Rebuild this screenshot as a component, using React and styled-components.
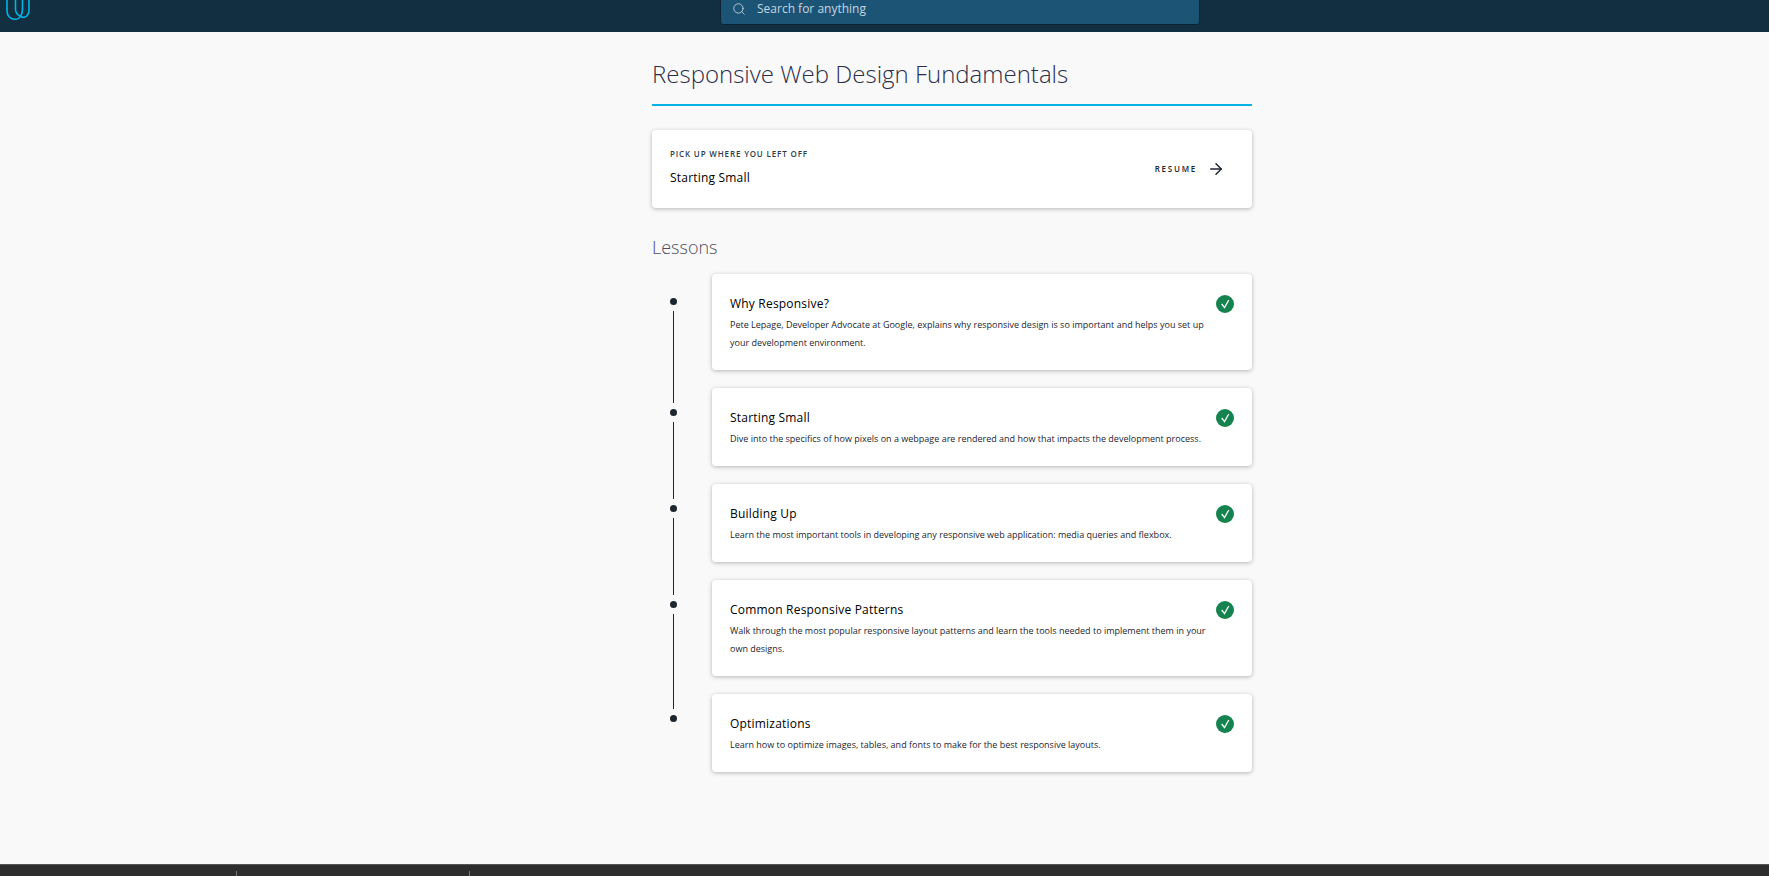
import React from "react";
import styled, { createGlobalStyle } from "styled-components";
import { Search, ArrowRight } from "lucide-react";

const Global = createGlobalStyle`
  html, body { margin: 0; padding: 0; height: 100%; background: #f9f9f9; }
  body { font-family: "Open Sans", "Liberation Sans", sans-serif; overflow: hidden; }
  #root { height: 876px; }
`;

const Page = styled.div`
  height: 876px;
  display: flex;
  flex-direction: column;
  background: #f9f9f9;
`;

const Header = styled.header`
  height: 32px;
  flex: none;
  background: #112f40;
  display: flex;
  align-items: flex-start;
  overflow: hidden;
`;

const LogoSlot = styled.div`
  width: 720px;
  height: 32px;
  flex: none;
`;

const SearchBox = styled.div`
  width: 480px;
  height: 40px;
  margin-top: -15px;
  box-sizing: border-box;
  background: #1c5475;
  border: 1px solid #0c2331;
  border-radius: 3px;
  display: flex;
  align-items: center;
  padding: 7px 0 0 11px;
  gap: 11px;
  color: #c4d6e0;
  font-size: 12px;
`;

const Main = styled.main`
  flex: 1;
  padding: 0 0 0 652px;
`;

const Column = styled.div`
  width: 600px;
`;

const Title = styled.h1`
  margin: 0;
  height: 74px;
  box-sizing: border-box;
  padding-top: 24px;
  border-bottom: 2px solid #02b3e4;
  font-size: 24px;
  line-height: 36px;
  font-weight: 300;
  color: #2c2f4a;
`;

const Card = styled.div`
  background: #fff;
  border-radius: 4px;
  box-shadow: 0 1px 4px rgba(0, 0, 0, 0.28);
`;

const ResumeCard = styled(Card)`
  margin-top: 24px;
  height: 78px;
  box-sizing: border-box;
  padding: 18px 27px 0 18px;
  display: flex;
  justify-content: space-between;
`;

const Eyebrow = styled.div`
  font-size: 8px;
  line-height: 12px;
  font-weight: 600;
  letter-spacing: 0.85px;
  color: #2e3d49;
`;

const ResumeTitle = styled.div`
  margin-top: 9px;
  font-size: 12px;
  line-height: 18px;
  font-weight: 500;
  letter-spacing: 0.2px;
  color: #000;
`;

const ResumeAction = styled.div`
  display: flex;
  align-items: center;
  gap: 10px;
  height: 41px;
  font-size: 8px;
  font-weight: 600;
  letter-spacing: 1.75px;
  color: #1c262f;
`;

const SectionTitle = styled.h2`
  margin: 27px 0 0;
  font-size: 18px;
  line-height: 24px;
  font-weight: 300;
  color: #4f4f5f;
`;

const LessonList = styled.div`
  margin-top: 15px;
  display: flex;
  flex-direction: column;
`;

const LessonRow = styled.div`
  display: grid;
  grid-template-columns: 60px 540px;
  padding-bottom: 18px;
`;

const Rail = styled.div`
  display: flex;
  flex-direction: column;
  align-items: center;
  width: 42px;
  padding-top: ${(p) => (p.$first ? "24px" : "21px")};
  margin-bottom: -18px;
`;

const Dot = styled.span`
  width: 7px;
  height: 7px;
  flex: none;
  border-radius: 50%;
  background: #1c262f;
`;

const RailLine = styled.span`
  width: 1px;
  flex: 1;
  margin: 6px 0 -15px;
  background: #1c262f;
`;

const LessonCard = styled(Card)`
  min-height: 78px;
  box-sizing: border-box;
  padding: 18px;
  display: grid;
  grid-template-columns: 1fr 18px;
  column-gap: 2px;
`;

const LessonName = styled.div`
  margin-top: 2px;
  font-size: 12px;
  line-height: 20px;
  font-weight: 500;
  letter-spacing: 0.2px;
  color: #000;
`;

const LessonDesc = styled.p`
  margin: 2px 0 0;
  font-size: 9px;
  line-height: 18px;
  color: #1c262f;
`;

const Tick = styled.svg`
  display: block;
  width: 18px;
  height: 18px;
  margin-top: 3px;
`;

const Footer = styled.footer`
  height: 12px;
  flex: none;
  box-sizing: border-box;
  background: #2d2d2d;
  border-top: 1px solid #555;
  display: flex;
  padding: 6px 0 0 236px;
  overflow: hidden;
`;

const FooterDivider = styled.span`
  width: 1px;
  height: 12px;
  background: #777;
  margin-right: 232px;
`;

const lessons = [
  ["Why Responsive?", "Pete Lepage, Developer Advocate at Google, explains why responsive design is so important and helps you set up your development environment."],
  ["Starting Small", "Dive into the specifics of how pixels on a webpage are rendered and how that impacts the development process."],
  ["Building Up", "Learn the most important tools in developing any responsive web application: media queries and flexbox."],
  ["Common Responsive Patterns", "Walk through the most popular responsive layout patterns and learn the tools needed to implement them in your own designs."],
  ["Optimizations", "Learn how to optimize images, tables, and fonts to make for the best responsive layouts."],
];

const Logo = () => (
  <svg width="36" height="32" viewBox="0 0 36 32" fill="none" stroke="#02b3e4" strokeWidth="1.6">
    <path d="M7 -2V11C7 16 10.500 19.300 15 19.300C18 19.300 20 17.500 21 15.500C22 13.500 22.500 11 22.500 9V-2" />
    <path d="M15.500 -2V9C15.500 12 17 14.500 20 16C21.500 17 23 17.400 24 17.400C27 16.500 29 14 29 10V-2" />
  </svg>
);

export default function App() {
  return (
    <Page>
      <Global />
      <Header>
        <LogoSlot><Logo /></LogoSlot>
        <SearchBox>
          <Search size={14} strokeWidth={1.5} />
          Search for anything
        </SearchBox>
      </Header>
      <Main>
        <Column>
          <Title>Responsive Web Design Fundamentals</Title>
          <ResumeCard>
            <div>
              <Eyebrow>PICK UP WHERE YOU LEFT OFF</Eyebrow>
              <ResumeTitle>Starting Small</ResumeTitle>
            </div>
            <ResumeAction>
              RESUME
              <ArrowRight size={18} strokeWidth={2} />
            </ResumeAction>
          </ResumeCard>
          <SectionTitle>Lessons</SectionTitle>
          <LessonList>
            {lessons.map(([name, desc], i) => (
              <LessonRow key={name}>
                <Rail $first={i === 0}>
                  <Dot />
                  {i < lessons.length - 1 && <RailLine />}
                </Rail>
                <LessonCard>
                  <div>
                    <LessonName>{name}</LessonName>
                    <LessonDesc>{desc}</LessonDesc>
                  </div>
                  <Tick viewBox="0 0 18 18">
                    <circle cx="9" cy="9" r="9" fill="#15834f" />
                    <path d="M5.700 9L8.500 12.600L12.800 5" fill="none" stroke="#fff" strokeWidth="1.300" />
                  </Tick>
                </LessonCard>
              </LessonRow>
            ))}
          </LessonList>
        </Column>
      </Main>
      <Footer>
        <FooterDivider />
        <FooterDivider />
      </Footer>
    </Page>
  );
}
